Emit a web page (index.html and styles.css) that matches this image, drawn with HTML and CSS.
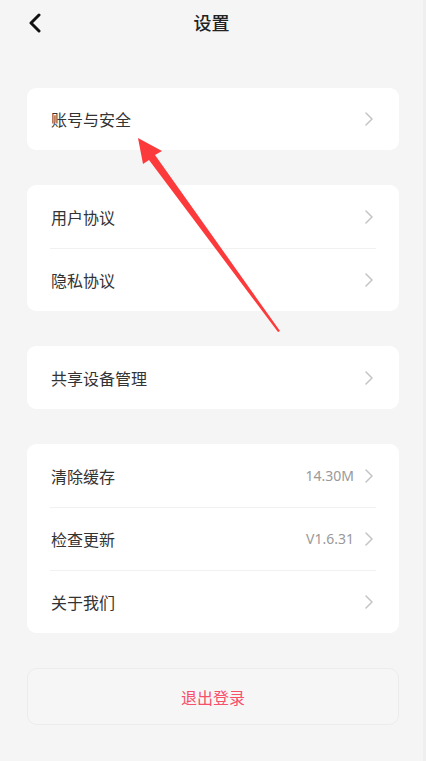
FILE: index.html
```html
<!DOCTYPE html>
<html lang="zh">
<head>
<meta charset="utf-8">
<title>设置</title>
<link rel="stylesheet" href="styles.css">
</head>
<body>
<div class="page">
  <header class="topbar">
    <svg class="back" width="14" height="20" viewBox="0 0 14 20"><path d="M11 2 L3 10 L11 18" fill="none" stroke="#111" stroke-width="3" stroke-linecap="round" stroke-linejoin="round"/></svg>
    <h1 class="title">设置</h1>
  </header>
  <main class="content">
    <section class="card">
      <div class="row"><span class="label">账号与安全</span><span class="right"><svg class="chev" width="8" height="14" viewBox="0 0 8 14"><path d="M1 1 L7 7 L1 13" fill="none" stroke="#c4c4c4" stroke-width="1.5" stroke-linecap="round" stroke-linejoin="round"/></svg></span></div>
    </section>
    <section class="card">
      <div class="row"><span class="label">用户协议</span><span class="right"><svg class="chev" width="8" height="14" viewBox="0 0 8 14"><path d="M1 1 L7 7 L1 13" fill="none" stroke="#c4c4c4" stroke-width="1.5" stroke-linecap="round" stroke-linejoin="round"/></svg></span></div>
      <div class="row divided"><span class="label">隐私协议</span><span class="right"><svg class="chev" width="8" height="14" viewBox="0 0 8 14"><path d="M1 1 L7 7 L1 13" fill="none" stroke="#c4c4c4" stroke-width="1.5" stroke-linecap="round" stroke-linejoin="round"/></svg></span></div>
    </section>
    <section class="card">
      <div class="row"><span class="label">共享设备管理</span><span class="right"><svg class="chev" width="8" height="14" viewBox="0 0 8 14"><path d="M1 1 L7 7 L1 13" fill="none" stroke="#c4c4c4" stroke-width="1.5" stroke-linecap="round" stroke-linejoin="round"/></svg></span></div>
    </section>
    <section class="card">
      <div class="row"><span class="label">清除缓存</span><span class="right"><span class="value">14.30M</span><svg class="chev" width="8" height="14" viewBox="0 0 8 14"><path d="M1 1 L7 7 L1 13" fill="none" stroke="#c4c4c4" stroke-width="1.5" stroke-linecap="round" stroke-linejoin="round"/></svg></span></div>
      <div class="row divided"><span class="label">检查更新</span><span class="right"><span class="value">V1.6.31</span><svg class="chev" width="8" height="14" viewBox="0 0 8 14"><path d="M1 1 L7 7 L1 13" fill="none" stroke="#c4c4c4" stroke-width="1.5" stroke-linecap="round" stroke-linejoin="round"/></svg></span></div>
      <div class="row divided"><span class="label">关于我们</span><span class="right"><svg class="chev" width="8" height="14" viewBox="0 0 8 14"><path d="M1 1 L7 7 L1 13" fill="none" stroke="#c4c4c4" stroke-width="1.5" stroke-linecap="round" stroke-linejoin="round"/></svg></span></div>
    </section>
    <button class="logout" type="button">退出登录</button>
  </main>
  <svg class="annotation" width="426" height="761" viewBox="0 0 426 761">
    <polygon points="138,138 162,151 155,155 280,331 278,332 149,160 143,164" fill="#fd3a3b"/>
  </svg>
</div>
</body>
</html>
```
FILE: styles.css
```css
* { box-sizing: border-box; }
html, body { margin: 0; padding: 0; }
body {
  background: #f5f5f5;
  font-family: "Noto Sans CJK SC", "Noto Sans", sans-serif;
  color: #333;
}
.page {
  position: relative;
  width: 426px;
  min-height: 761px;
  background: #f5f5f5;
  border-right: 3px solid #efefef;
}
.topbar {
  height: 44px;
  display: flex;
  align-items: center;
  justify-content: center;
  position: relative;
}
.back {
  position: absolute;
  left: 28px;
  top: 13px;
}
.title {
  margin: 0;
  font-size: 18px;
  font-weight: 500;
  color: #222;
  line-height: 1;
}
.content {
  padding: 44px 24px 0 27px;
  display: flex;
  flex-direction: column;
  gap: 35px;
}
.card {
  background: #fff;
  border-radius: 9px;
  display: flex;
  flex-direction: column;
}
.row {
  height: 63px;
  display: flex;
  align-items: center;
  justify-content: space-between;
  padding: 0 26px 0 24px;
  position: relative;
}
.card:first-child .row { height: 62px; }
.divided::before {
  content: "";
  position: absolute;
  top: 0;
  left: 23px;
  right: 23px;
  height: 1px;
  background: #f1f1f1;
}
.label {
  font-size: 16px;
  color: #333;
}
.right {
  display: flex;
  align-items: center;
  gap: 11px;
}
.value {
  font-size: 14px;
  color: #999;
  font-family: "Noto Sans", "Noto Sans CJK SC", sans-serif;
}
.chev { display: block; }
.logout {
  height: 57px;
  border: 1px solid #ececec;
  border-radius: 10px;
  background: #f6f6f6;
  color: #f6506a;
  font-family: "Noto Sans CJK SC", "Noto Sans", sans-serif;
  font-size: 16px;
  font-weight: 400;
}
.annotation {
  position: absolute;
  left: 0;
  top: 0;
  pointer-events: none;
}
```
